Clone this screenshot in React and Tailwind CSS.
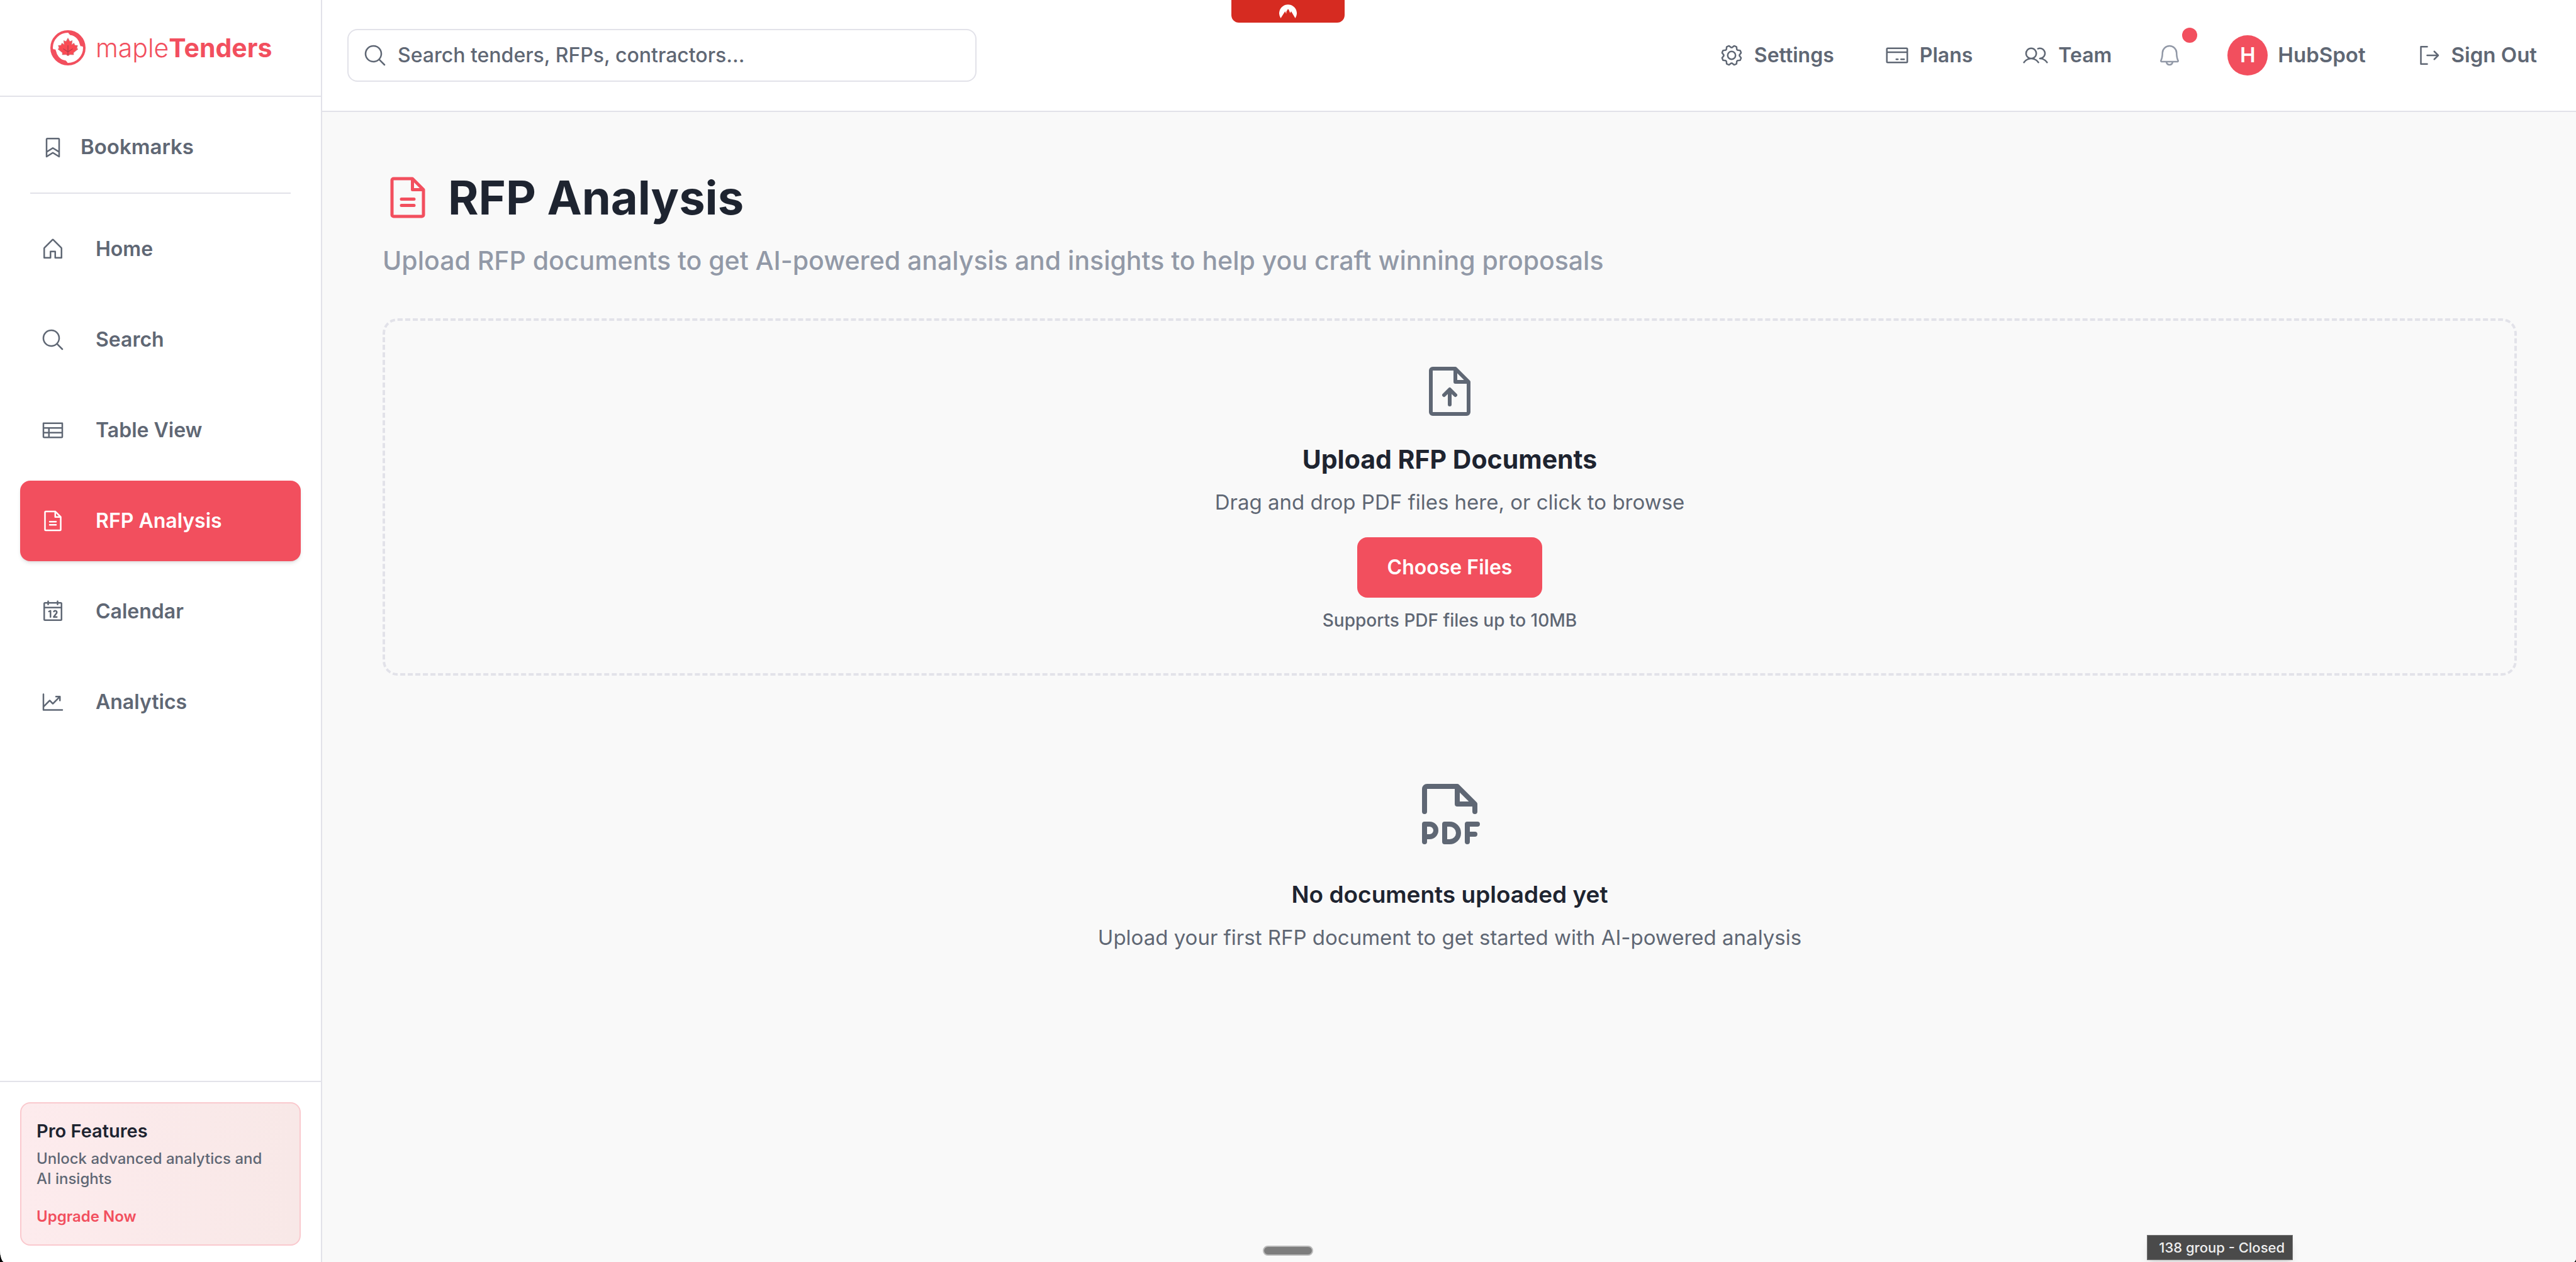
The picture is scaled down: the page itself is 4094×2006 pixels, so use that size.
import {
  PiBell,
  PiBookmark,
  PiCalendar,
  PiChartLineUp,
  PiCreditCard,
  PiFileArrowUp,
  PiFilePdf,
  PiFileText,
  PiGear,
  PiHouse,
  PiMagnifyingGlass,
  PiSignOut,
  PiTable,
  PiUsers,
} from "react-icons/pi";

const NAV_ITEMS = [
  { label: "Home", icon: PiHouse },
  { label: "Search", icon: PiMagnifyingGlass },
  { label: "Table View", icon: PiTable },
  { label: "RFP Analysis", icon: PiFileText, active: true },
  { label: "Calendar", icon: PiCalendar },
  { label: "Analytics", icon: PiChartLineUp },
];

const HEADER_LINKS = [
  { label: "Settings", icon: PiGear },
  { label: "Plans", icon: PiCreditCard },
  { label: "Team", icon: PiUsers },
];

function LogoMark() {
  return (
    <svg viewBox="0 0 56 56" className="size-14 shrink-0" aria-hidden="true">
      <circle cx="28" cy="28" r="26" fill="none" stroke="#f24f5e" strokeWidth="4" />
      <path
        d="M28 2 L29 5 L31.5 7.8 Q38 8.5 42.5 13.5 Q46 17.5 47 23 L48 25.5 L50.5 25.5 L52.5 27 L54 28 A26 26 0 0 0 28 2 Z"
        fill="#f24f5e"
      />
      <path
        d="M28 54 L27 51 L24.5 48.2 Q18 47.5 13.5 42.5 Q10 38.5 9 33 L8 30.5 L5.5 30.5 L3.5 29 L2 28 A26 26 0 0 0 28 54 Z"
        fill="#f24f5e"
      />
      <path
        d="M28 12.5 L31 18 L34.8 16.5 L33.8 23.2 L37.5 20.5 L39 24 L43.3 24.3 L42 28.7 L44 30 L36.8 35.8 L37 39 L31 38.8 L28 40.8 L25 38.8 L19 39 L19.2 35.8 L12 30 L14 28.7 L12.7 24.3 L17 24 L18.5 20.5 L22.2 23.2 L21.2 16.5 L25 18 Z"
        fill="#fa4a54"
        stroke="#c9747b"
        strokeWidth="0.7"
        strokeLinejoin="round"
      />
      <path d="M28 24 V40 M28 34.5 L20.5 29.5 M28 34.5 L35.5 29.5" fill="none" stroke="#b83c49" strokeWidth="1.3" />
    </svg>
  );
}

function Sidebar() {
  return (
    <aside className="flex w-lg shrink-0 flex-col border-r-2 border-[#e2e2e9] bg-white">
      <div className="flex h-[154px] shrink-0 items-center border-b-2 border-[#e2e2e9] px-20">
        <a href="#" className="flex items-center gap-4 text-[41px] leading-14 text-[#f24f5e]">
          <LogoMark />
          <span>
            <span className="font-light">maple</span>
            <span className="font-bold">Tenders</span>
          </span>
        </a>
      </div>

      <nav className="flex flex-1 flex-col px-8 pt-8">
        <a href="#" className="flex h-24 items-center gap-6 px-8 text-[33px] font-semibold">
          <PiBookmark className="size-10 shrink-0" />
          Bookmarks
        </a>
        <hr className="mx-4 mt-6 mb-6 border-t-2 border-[#e2e2e9]" />
        <ul className="flex flex-col gap-4">
          {NAV_ITEMS.map(({ label, icon: Icon, active }) => (
            <li key={label}>
              <a
                href="#"
                aria-current={active ? "page" : undefined}
                className={
                  active
                    ? "flex h-32 items-center gap-12 rounded-2xl bg-[#f24f5e] px-8 text-[32px] font-semibold text-white shadow-md"
                    : "flex h-32 items-center gap-12 rounded-2xl px-8 text-[32px] font-semibold"
                }
              >
                <Icon className="size-10 shrink-0" />
                {label}
              </a>
            </li>
          ))}
        </ul>
      </nav>

      <div className="border-t-2 border-[#e2e2e9] px-8 pt-8 pb-[26px]">
        <section className="rounded-2xl border-2 border-[#fac9ce] bg-linear-to-r from-[#fdebed] to-[#f8e8e7] p-6">
          <h2 className="text-[29px] leading-10 font-semibold text-[#1e2430]">Pro Features</h2>
          <p className="mt-2 pr-4 text-[24px] leading-8 font-medium">Unlock advanced analytics and AI insights</p>
          <button type="button" className="mt-4 block pt-3 pb-1 text-[24px] leading-8 font-semibold text-[#f24f5e]">
            Upgrade Now
          </button>
        </section>
      </div>
    </aside>
  );
}

function Header() {
  return (
    <header className="flex h-[178px] shrink-0 items-center justify-between border-b-2 border-[#e2e2e9] bg-white pr-[30px] pl-10">
      <label className="flex h-[84px] w-[1000px] items-center gap-4 rounded-2xl border-2 border-[#e2e2e9] px-[22px]">
        <PiMagnifyingGlass className="size-10 shrink-0" />
        <input
          type="search"
          aria-label="Search"
          placeholder="Search tenders, RFPs, contractors..."
          className="min-w-0 flex-1 bg-transparent text-[32px] font-medium outline-none placeholder:text-[#5f6774] placeholder:opacity-100"
        />
      </label>

      <nav className="flex items-center gap-4 text-[33px] font-semibold">
        {HEADER_LINKS.map(({ label, icon: Icon }) => (
          <a key={label} href="#" className="flex items-center gap-4 px-8 text-[32px]">
            <Icon className="size-10 shrink-0" />
            {label}
          </a>
        ))}
        <button type="button" aria-label="Notifications" className="relative p-6 text-[#9299a7]">
          <PiBell className="size-10" />
          <span className="absolute top-0 right-0 size-6 rounded-full bg-[#f24f5e]" />
        </button>
        <button type="button" className="flex items-center gap-4 px-8">
          <span className="flex size-16 items-center justify-center rounded-full bg-[#f24f5e] text-white">H</span>
          HubSpot
        </button>
        <button type="button" className="flex items-center gap-4 px-8">
          <PiSignOut className="size-10 shrink-0" />
          Sign Out
        </button>
      </nav>
    </header>
  );
}

function Main() {
  return (
    <main className="flex-1 bg-[#f9f9f9] py-24 pr-[94px] pl-24">
      <div className="flex items-center gap-6">
        <PiFileText className="size-20 shrink-0 text-[#f24f5e]" />
        <h1 className="text-[74px] leading-20 font-bold text-[#1e2430]">RFP Analysis</h1>
      </div>
      <p className="mt-8 text-[41px] leading-14 font-medium text-[#9299a7]">
        Upload RFP documents to get AI-powered analysis and insights to help you craft winning proposals
      </p>

      <section className="mt-16 flex flex-col items-center rounded-3xl border-4 border-dashed border-[#e2e2e9] p-16">
        <PiFileArrowUp className="size-24" />
        <h2 className="mt-8 text-[41px] leading-14 font-bold text-[#1e2430]">Upload RFP Documents</h2>
        <p className="mt-4 text-[33px] leading-12">Drag and drop PDF files here, or click to browse</p>
        <button
          type="button"
          className="mt-8 h-24 rounded-2xl bg-[#f24f5e] px-12 text-[32px] font-semibold text-white"
        >
          Choose Files
        </button>
        <p className="mt-4 text-[28px] leading-10 font-medium">Supports PDF files up to 10MB</p>
      </section>

      <section className="mt-16 flex flex-col items-center py-24">
        <PiFilePdf className="size-32" />
        <h2 className="mt-8 text-[37px] leading-14 font-semibold text-[#1e2430]">No documents uploaded yet</h2>
        <p className="mt-4 text-[33px] leading-12">
          Upload your first RFP document to get started with AI-powered analysis
        </p>
      </section>
    </main>
  );
}

function ExtensionTab() {
  return (
    <div className="absolute top-0 left-1/2 flex h-9 w-[180px] -translate-x-1/2 justify-center rounded-b-xl bg-[#d62b21] pt-[7px]">
      <svg viewBox="0 0 28 22" className="h-[22px] w-7" aria-hidden="true">
        <path
          d="M2.4 22 A14 14 0 1 1 25.6 22 L19 11 L17.4 13.8 L15 8 L13.8 7.6 L11.4 11.5 L11.2 15 L9.4 11 Z"
          fill="white"
        />
      </svg>
    </div>
  );
}

export default function App() {
  return (
    <div className="bg-black">
      <div className="relative flex min-h-screen overflow-hidden rounded-br-[4px_6px] rounded-bl-[7px_20px] bg-white font-['Inter',sans-serif] text-[#5f6774]">
        <Sidebar />
        <div className="flex min-w-0 flex-1 flex-col">
          <Header />
          <Main />
        </div>
        <ExtensionTab />
        <div className="absolute bottom-2.5 left-1/2 h-4 w-20 -translate-x-1/2 rounded-full border-2 border-[#bababa] bg-[#7d7d7d]" />
        <div
          role="tooltip"
          className="absolute right-[450px] bottom-[3px] flex h-10 items-center border border-[#777777] bg-[#4a4a4a] pr-3 pl-[18px] text-[22px] font-medium whitespace-nowrap text-[#efefef] shadow-lg"
        >
          138 group - Closed
        </div>
      </div>
    </div>
  );
}
